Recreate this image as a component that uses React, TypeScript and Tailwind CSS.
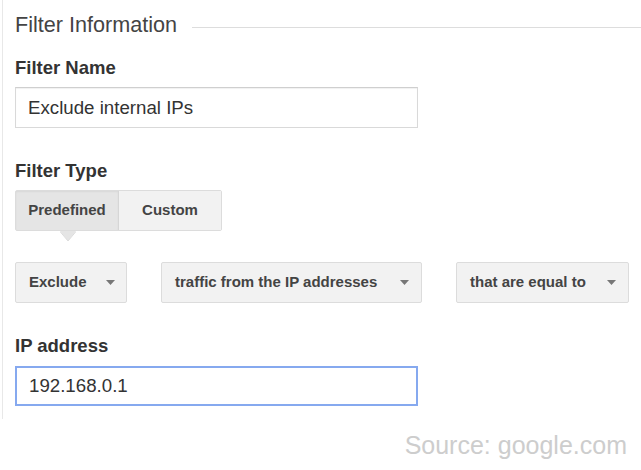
import { ReactNode } from "react";

const FONT = { fontFamily: '"Liberation Sans", Arial, sans-serif' };

function Label({ children, className = "" }: { children: ReactNode; className?: string }) {
  return <div className={`text-[18.5px] leading-[21px] font-bold text-[#333] ${className}`}>{children}</div>;
}

function Caret() {
  return (
    <svg width="9" height="5" viewBox="0 0 9 5" className="shrink-0">
      <path d="M0 0h9L4.5 5z" fill="#777" />
    </svg>
  );
}

function Select({ label, className = "" }: { label: string; className?: string }) {
  return (
    <div
      className={`h-[41px] flex items-center justify-between pl-[13px] pr-[12px] gap-[19px] bg-[#f2f2f2] border border-[#dcdcdc] rounded-[2px] text-[15px] font-bold text-[#444] ${className}`}
    >
      <span>{label}</span>
      <Caret />
    </div>
  );
}

export default function App() {
  return (
    <div className="w-[641px] h-[470px] bg-white overflow-hidden" style={FONT}>
      <div className="ml-[2px] border-l border-[#e8e8e8] pl-[12px] pt-[13px] pb-[13px]">
        <div className="flex items-center">
          <h2 className="text-[21.6px] leading-[24px] text-[#444] font-normal whitespace-nowrap">Filter Information</h2>
          <div className="flex-1 h-px bg-[#dddddd] ml-[15px] mt-[4px]" />
        </div>

        <Label className="mt-[20px]">Filter Name</Label>
        <input
          readOnly
          defaultValue="Exclude internal IPs"
          className="mt-[9px] block w-[403px] h-[41px] pl-[12px] border border-[#d9d9d9] border-t-[#cfcfcf] shadow-[inset_0_1px_1px_rgba(0,0,0,0.06)] text-[18.7px] text-[#333] outline-none"
        />

        <Label className="mt-[32px]">Filter Type</Label>
        <div className="relative mt-[9px] flex w-[207px] h-[41px] border border-[#dcdcdc] rounded-[2px] text-[15px] font-bold text-[#444]">
          <div className="w-[103px] flex items-center justify-center bg-[#e5e5e5] border-r border-[#d6d6d6] shadow-[inset_0_1px_2px_rgba(0,0,0,0.06)]">
            Predefined
          </div>
          <div className="flex-1 flex items-center justify-center bg-[#f2f2f2]">Custom</div>
          <svg width="16" height="11" viewBox="0 0 16 11" className="absolute left-[44px] top-[40px]">
            <path d="M0 0h16L8 10z" fill="#e5e5e5" />
            <path d="M0 0.5L8 10L16 0.5" fill="none" stroke="#dcdcdc" strokeWidth="1" />
          </svg>
        </div>

        <div className="mt-[31px] flex gap-[34px]">
          <Select label="Exclude" className="w-[112px]" />
          <Select label="traffic from the IP addresses" className="w-[261px]" />
          <Select label="that are equal to" className="w-[173px]" />
        </div>

        <Label className="mt-[32px]">IP address</Label>
        <input
          readOnly
          defaultValue="192.168.0.1"
          className="mt-[10px] block w-[403px] h-[40px] pl-[12px] border-2 border-[#86a9ef] text-[18.7px] text-[#333] outline-none"
        />
      </div>

      <div className="mt-[12px] pr-[14px] text-right text-[25px] leading-[28px] text-[#cdcdcd]">Source: google.com</div>
    </div>
  );
}
